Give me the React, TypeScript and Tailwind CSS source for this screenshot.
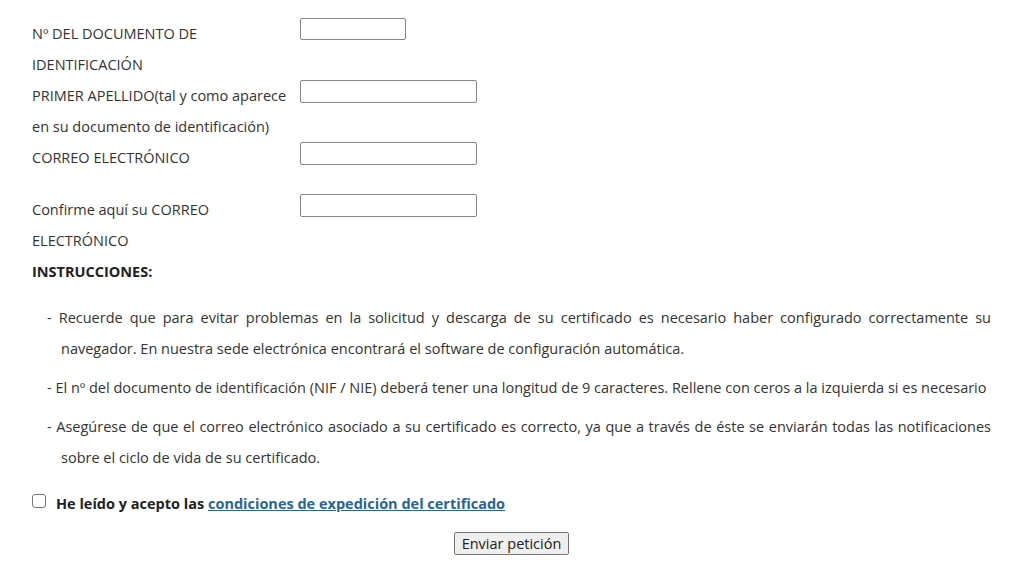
export default function App() {
  const rows = [
    { label: "Nº DEL DOCUMENTO DE IDENTIFICACIÓN", input: "w-[106px] h-[22px]", extra: "" },
    { label: "PRIMER APELLIDO(tal y como aparece en su documento de identificación)", input: "w-[177px] h-[23px]", extra: "" },
    { label: "CORREO ELECTRÓNICO", input: "w-[177px] h-[23px]", extra: "mb-[21px]" },
    { label: "Confirme aquí su CORREO ELECTRÓNICO", input: "w-[177px] h-[23px]", extra: "" },
  ];

  return (
    <main className="min-h-screen bg-white px-8 pt-[18px] font-['Open_Sans',sans-serif] text-[14.5px] leading-[31px] text-[#333]">
      {/* FORMULARIO */}
      <div className="flex flex-col">
        {rows.map((r) => (
          <div key={r.label} className={`flex items-start ${r.extra}`}>
            <label className="w-[262px] shrink-0">{r.label}</label>
            <input
              type="text"
              className={`ml-[6px] rounded-[2px] border border-[#858585] bg-white ${r.input}`}
            />
          </div>
        ))}
      </div>

      <p className="font-bold text-[#222]">INSTRUCCIONES:</p>

      {/* INSTRUCCIONES */}
      <div className="mt-[15px] flex flex-col gap-2 pl-[29px] text-justify">
        <p className="-indent-[14px]">
          - Recuerde que para evitar problemas en la solicitud y descarga de su certificado es necesario haber configurado correctamente su navegador. En nuestra sede electrónica encontrará el software de configuración automática.
        </p>
        <p className="-indent-[14px]">
          - El nº del documento de identificación (NIF / NIE) deberá tener una longitud de 9 caracteres. Rellene con ceros a la izquierda si es necesario
        </p>
        <p className="-indent-[14px]">
          - Asegúrese de que el correo electrónico asociado a su certificado es correcto, ya que a través de éste se enviarán todas las notificaciones sobre el ciclo de vida de su certificado.
        </p>
      </div>

      {/* ACEPTACION */}
      <label className="mt-[15px] flex items-start gap-[10px] font-bold text-[#222]">
        <input
          type="checkbox"
          className="mt-[6px] h-[14px] w-[14px] shrink-0 appearance-none rounded-[3px] border border-[#767676] bg-white"
        />
        <span>
          He leído y acepto las{" "}
          <a href="#" className="text-[#2a6496] underline">
            condiciones de expedición del certificado
          </a>
        </span>
      </label>

      <div className="mt-[13px] flex justify-center">
        <button className="h-[23px] rounded-[2px] border border-[#767676] bg-[#efefef] px-[7px] leading-[21px] text-[#222]">
          Enviar petición
        </button>
      </div>
    </main>
  );
}
